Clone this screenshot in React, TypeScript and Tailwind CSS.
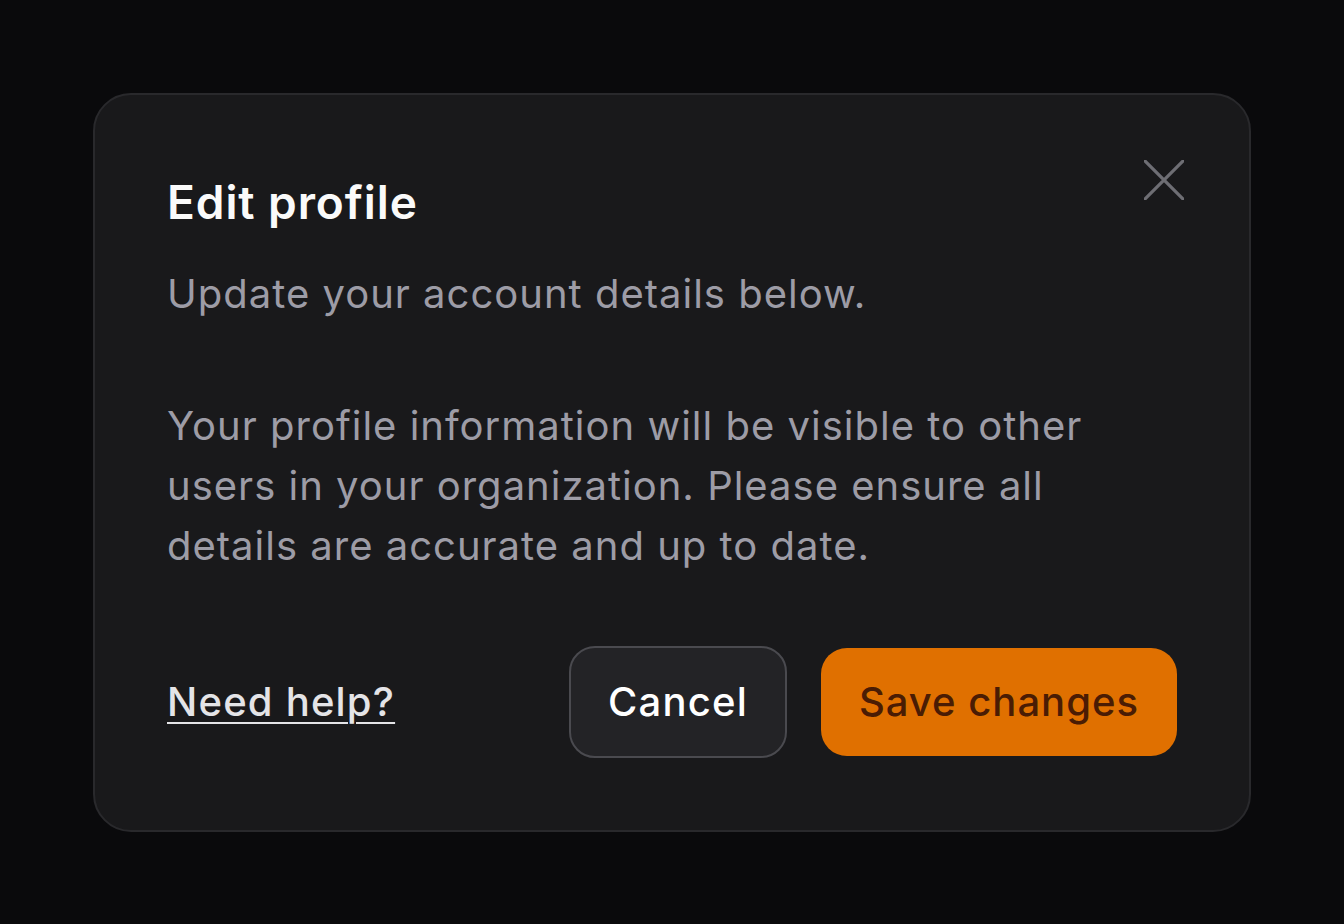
export default function App() {
  return (
    <div className="flex h-[924px] w-full items-center justify-center bg-[#0a0a0c] font-[Inter,sans-serif] antialiased">
      <div className="relative w-[1158px] rounded-[38px] border-2 border-[#29292c] bg-[#19191b] p-[72px]">
        <button className="absolute right-[65px] top-[65px] text-[#6e6e74]" aria-label="Close">
          <svg width="40" height="40" viewBox="0 0 40 40" className="block overflow-hidden">
            <path d="M0 0 40 40M40 0 0 40" stroke="currentColor" strokeWidth="3.2" />
          </svg>
        </button>

        <h2 className="text-[46px] font-semibold leading-[70px] tracking-[0.02em] text-[#fafafa]">Edit profile</h2>
        <p className="mt-[27px] text-[40px] leading-[60px] tracking-[0.025em] text-[#9d9ca6]">
          Update your account details below.
        </p>
        <p className="mt-[72px] text-[40px] leading-[60px] tracking-[0.025em] text-[#9d9ca6]">
          Your profile information will be visible to other users in your organization. Please ensure all
          details are accurate and up to date.
        </p>

        <div className="mt-[70px] flex items-center justify-between">
          <a
            href="#"
            className="text-[40px] leading-[60px] font-medium tracking-[0.03em] text-[#e4e4e7] underline decoration-2 underline-offset-[6px]"
          >
            Need help?
          </a>
          <div className="flex items-center gap-[34px]">
            <button className="rounded-[26px] border-2 border-[#4a4a4f] bg-[#232326] px-[37px] py-6 text-[40px] leading-[60px] font-medium tracking-[0.03em] text-white">
              Cancel
            </button>
            <button className="rounded-[26px] bg-[#e07000] px-[38px] py-6 text-[40px] leading-[60px] font-medium tracking-[0.025em] text-[#4a1c04]">
              Save changes
            </button>
          </div>
        </div>
      </div>
    </div>
  );
}
